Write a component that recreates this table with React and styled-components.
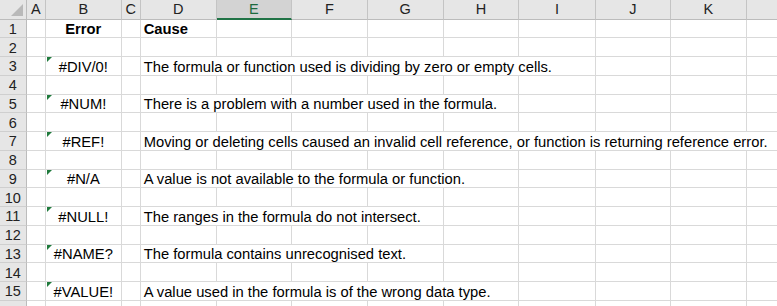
import React from "react";
import styled, { createGlobalStyle, css } from "styled-components";

const Global = createGlobalStyle`
  html, body { margin: 0; padding: 0; background: #ffffff; }
  body { width: 777px; height: 306px; overflow: hidden; }
`;

const COLS = ["A", "B", "C", "D", "E", "F", "G", "H", "I", "J", "K", "L"];
const WIDTHS = [26.7, 19.3, 75.7, 19, 76, 75.3, 75.7, 76, 75.6, 76.4, 75.3, 75.7, 60];

const Sheet = styled.div`
  display: grid;
  grid-template-columns: ${WIDTHS.map((w) => w + "px").join(" ")};
  grid-template-rows: 19.5px repeat(16, 18.75px);
  width: 777px;
  height: 306px;
  overflow: hidden;
  font-family: "Liberation Sans", Arial, sans-serif;
  color: #000;
`;

const Corner = styled.div`
  position: relative;
  background: #e6e6e6;
  border-right: 1px solid #bcbcbc;
  border-bottom: 1px solid #bcbcbc;
  box-sizing: border-box;
  &::after {
    content: "";
    position: absolute;
    right: 3px;
    bottom: 3px;
    width: 0;
    height: 0;
    border-left: 12px solid transparent;
    border-bottom: 12px solid #b9b9b9;
  }
`;

const ColHeader = styled.div`
  display: flex;
  align-items: center;
  justify-content: center;
  box-sizing: border-box;
  background: ${(p) => (p.$selected ? "#d3d3d3" : "#e6e6e6")};
  border-right: 1px solid #c4c4c4;
  border-bottom: ${(p) => (p.$selected ? "2px solid #217346" : "1px solid #bcbcbc")};
  color: ${(p) => (p.$selected ? "#1d6a3e" : "#222")};
  font-family: "Liberation Sans", Arial, sans-serif;
  font-size: 14.5px;
  padding-top: ${(p) => (p.$selected ? "1px" : "0")};
`;

const RowHeader = styled.div`
  display: flex;
  align-items: center;
  justify-content: center;
  box-sizing: border-box;
  background: #e6e6e6;
  border-right: 1px solid #bcbcbc;
  border-bottom: 1px solid #cfcfcf;
  color: #222;
  font-size: 14.5px;
  padding-top: 1px;
`;

const Cell = styled.div`
  position: relative;
  display: flex;
  align-items: flex-end;
  box-sizing: border-box;
  border-right: 1px solid #d9d9d9;
  border-bottom: 1px solid #d9d9d9;
  background: #fff;
  font-size: 14.75px;
  line-height: 15px;
  white-space: nowrap;
  overflow: visible;
  padding: 0 3px 0 3px;
  justify-content: ${(p) => (p.$center ? "center" : "flex-start")};
  font-weight: ${(p) => (p.$bold ? 700 : 400)};
  grid-column: ${(p) => (p.$span ? `span ${p.$span}` : "auto")};
  ${(p) =>
    p.$flag &&
    css`
      &::before {
        content: "";
        position: absolute;
        left: 1px;
        top: 0;
        width: 0;
        height: 0;
        border-top: 5px solid #1f7a3c;
        border-right: 5px solid transparent;
      }
    `}
`;

const rows = [
  { b: "Error", d: "Cause", bold: true, span: 1 },
  null,
  { b: "#DIV/0!", d: "The formula or function used is dividing by zero or empty cells.", span: 6, flag: true },
  null,
  { b: "#NUM!", d: "There is a problem with a number used in the formula.", span: 5, flag: true },
  null,
  { b: "#REF!", d: "Moving or deleting cells caused an invalid cell reference, or function is returning reference error.", span: 9, flag: true },
  null,
  { b: "#N/A", d: "A value is not available to the formula or function.", span: 5, flag: true },
  null,
  { b: "#NULL!", d: "The ranges in the formula do not intersect.", span: 4, flag: true },
  null,
  { b: "#NAME?", d: "The formula contains unrecognised text.", span: 4, flag: true },
  null,
  { b: "#VALUE!", d: "A value used in the formula is of the wrong data type.", span: 5, flag: true },
  null,
];

function Row({ n, data }) {
  const cells = [<RowHeader key="h">{n <= 15 ? n : ""}</RowHeader>, <Cell key="A" />];
  if (!data) {
    for (let i = 1; i < COLS.length; i++) cells.push(<Cell key={COLS[i]} />);
    return cells;
  }
  cells.push(
    <Cell key="B" $center $bold={data.bold} $flag={data.flag}>
      {data.b}
    </Cell>
  );
  cells.push(<Cell key="C" />);
  cells.push(
    <Cell key="D" $bold={data.bold} $span={data.span}>
      {data.d}
    </Cell>
  );
  const used = 3 + data.span;
  for (let i = used; i < COLS.length; i++) cells.push(<Cell key={COLS[i]} />);
  return cells;
}

export default function App() {
  return (
    <>
      <Global />
      <Sheet>
        <Corner />
        {COLS.map((c) => (
          <ColHeader key={c} $selected={c === "E"}>
            {c === "L" ? "" : c}
          </ColHeader>
        ))}
        {rows.map((r, i) => (
          <Row key={i} n={i + 1} data={r} />
        ))}
      </Sheet>
    </>
  );
}
